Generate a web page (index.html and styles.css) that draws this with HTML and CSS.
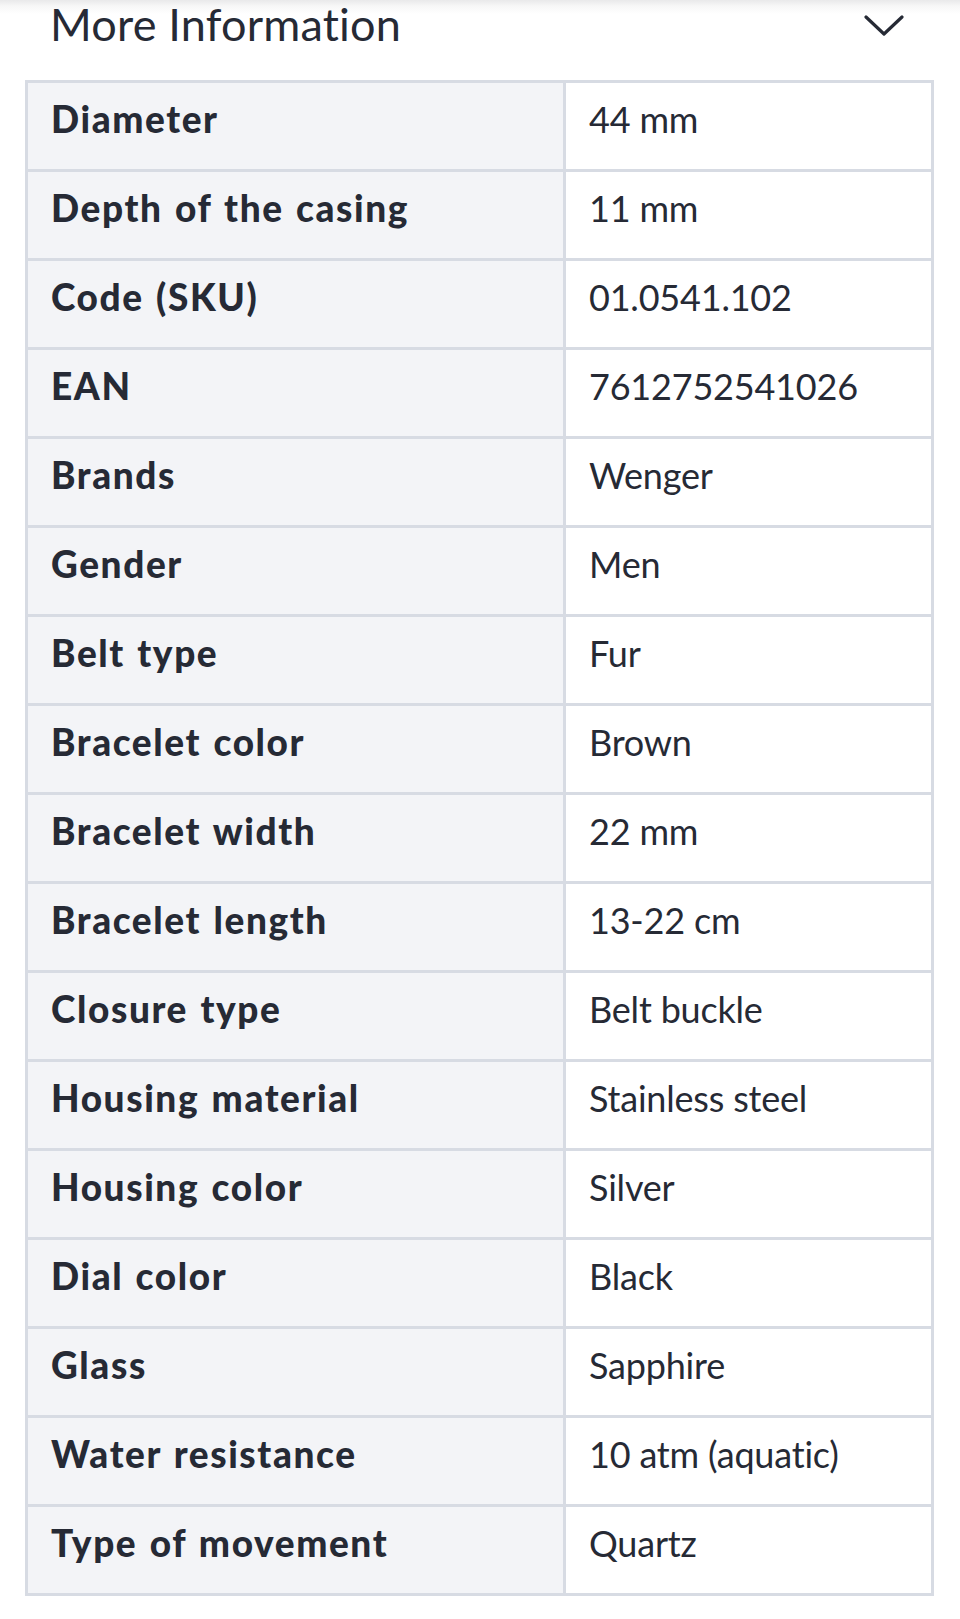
FILE: index.html
```html
<!DOCTYPE html>
<html>
<head>
<meta charset="utf-8">
<link rel="stylesheet" href="styles.css">
</head>
<body>
<div class="page">
  <div class="header">
    <h2 class="title">More Information</h2>
    <svg class="chevron" width="40" height="24" viewBox="0 0 40 24"><path d="M2 3 L20 20 L38 3" fill="none" stroke="#262a35" stroke-width="3.2" stroke-linecap="round" stroke-linejoin="round"/></svg>
  </div>
  <table class="specs">
    <tr><th>Diameter</th><td>44 mm</td></tr>
    <tr><th>Depth of the casing</th><td>11 mm</td></tr>
    <tr><th>Code (SKU)</th><td>01.0541.102</td></tr>
    <tr><th>EAN</th><td>7612752541026</td></tr>
    <tr><th>Brands</th><td>Wenger</td></tr>
    <tr><th>Gender</th><td>Men</td></tr>
    <tr><th>Belt type</th><td>Fur</td></tr>
    <tr><th>Bracelet color</th><td>Brown</td></tr>
    <tr><th>Bracelet width</th><td>22 mm</td></tr>
    <tr><th>Bracelet length</th><td>13-22 cm</td></tr>
    <tr><th>Closure type</th><td>Belt buckle</td></tr>
    <tr><th>Housing material</th><td>Stainless steel</td></tr>
    <tr><th>Housing color</th><td>Silver</td></tr>
    <tr><th>Dial color</th><td>Black</td></tr>
    <tr><th>Glass</th><td>Sapphire</td></tr>
    <tr><th>Water resistance</th><td>10 atm (aquatic)</td></tr>
    <tr><th>Type of movement</th><td>Quartz</td></tr>
  </table>
</div>
</body>
</html>
```
FILE: styles.css
```css
html, body {
  margin: 0;
  padding: 0;
  background: #ffffff;
}
.page {
  width: 960px;
  font-family: Lato, "Liberation Sans", sans-serif;
  color: #262a35;
  background: linear-gradient(to bottom, #e9e9ea 0px, #f7f7f7 6px, #ffffff 14px);
}
.header {
  height: 80px;
  display: flex;
  align-items: flex-start;
  justify-content: space-between;
  padding: 0 56px 0 50px;
  box-sizing: border-box;
}
.title {
  margin: 0;
  font-weight: 400;
  font-size: 45px;
  line-height: 48px;
  letter-spacing: 0.2px;
}
.chevron {
  margin-top: 14px;
}
.specs {
  margin-left: 25px;
  width: 909px;
  border-collapse: collapse;
  border: 3px solid #d7dbe3;
  table-layout: fixed;
}
.specs th, .specs td {
  height: 89px;
  box-sizing: border-box;
  border: 3px solid #d7dbe3;
  padding: 0 0 15px 23px;
  text-align: left;
  vertical-align: middle;
  font-size: 37px;
  line-height: 40px;
}
.specs th {
  width: 538px;
  background: #f3f4f7;
  font-weight: 900;
  letter-spacing: 1.6px;
  word-spacing: 2px;
}
.specs td {
  background: #ffffff;
  font-weight: 400;
  font-size: 36px;
  letter-spacing: -0.2px;
}
```
